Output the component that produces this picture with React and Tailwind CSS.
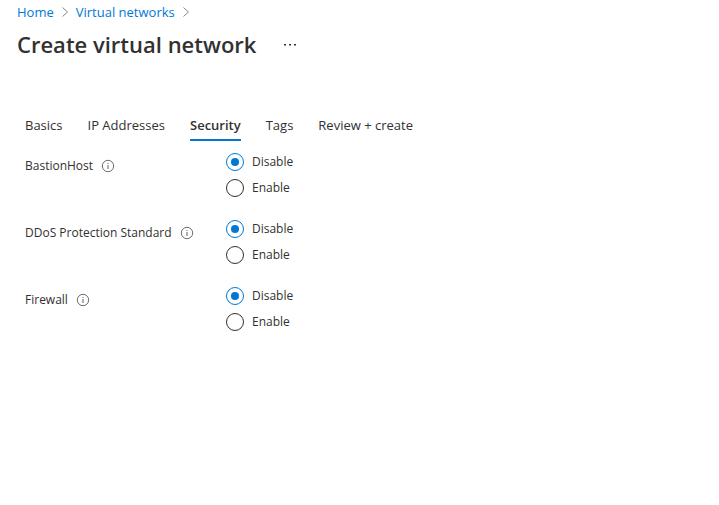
import { useState } from "react";

const TABS = ["Basics", "IP Addresses", "Security", "Tags", "Review + create"];

const SETTINGS = [
  { id: "bastion", label: "BastionHost" },
  { id: "ddos", label: "DDoS Protection Standard" },
  { id: "firewall", label: "Firewall" },
];

function Chevron() {
  return (
    <svg className="h-3 w-2 shrink-0" viewBox="0 0 8 12" fill="none" stroke="#8a8886" aria-hidden="true">
      <path d="M1.5 1.5 6.5 6l-5 4.5" />
    </svg>
  );
}

function InfoIcon() {
  return (
    <svg className="block size-3.5" viewBox="0 0 14 14" fill="none" aria-hidden="true">
      <circle cx="7" cy="7" r="5.7" stroke="#605e5c" strokeWidth="0.9" />
      <path d="M7 6v4" stroke="#605e5c" />
      <path d="M6.5 4h1v1h-1z" fill="#605e5c" />
    </svg>
  );
}

function Setting({ id, label }) {
  const [value, setValue] = useState("Disable");
  return (
    <div role="radiogroup" aria-labelledby={id} className="grid grid-cols-[201px_1fr] items-start">
      <div className="flex items-center gap-2 pt-1">
        <span id={id} className="leading-5">{label}</span>
        <button type="button" aria-label={`About ${label}`}>
          <InfoIcon />
        </button>
      </div>
      <div className="flex flex-col items-start gap-1.5">
        {["Disable", "Enable"].map((option) => (
          <label key={option} className="flex items-center gap-2 leading-5">
            <input
              type="radio"
              name={id}
              value={option}
              checked={value === option}
              onChange={() => setValue(option)}
              className="grid size-[18px] appearance-none place-items-center rounded-full border border-[#323130] before:size-2 before:rounded-full checked:border-[#0078d4] checked:before:bg-[#0078d4]"
            />
            {option}
          </label>
        ))}
      </div>
    </div>
  );
}

export default function App() {
  const [active, setActive] = useState("Security");
  return (
    <main className="min-h-screen bg-white font-['Open_Sans','Noto_Sans',sans-serif] text-[12px] text-[#323130]">
      <header className="px-[17px] pt-0.5">
        <nav aria-label="Breadcrumb" className="flex items-center gap-[7px] text-[13px] leading-5 text-[#0078d4]">
          <a href="#home">Home</a>
          <Chevron />
          <a href="#networks">Virtual networks</a>
          <Chevron />
        </nav>
        <div className="mt-1.5 flex items-center gap-6">
          <h1 className="text-[22px] leading-8 font-semibold">Create virtual network</h1>
          <button type="button" aria-label="More actions" className="p-1">
            <svg className="h-1 w-3" viewBox="0 0 12 4" fill="#323130" aria-hidden="true">
              <path d="M0 2h2v1.5H0zM5 2h2v1.5H5zM10 2h2v1.5h-2z" />
            </svg>
          </button>
        </div>
      </header>
      <div className="px-[25px] pt-[53px]">
        <div role="tablist" className="flex gap-[25px] text-[13px]">
          {TABS.map((tab) => (
            <button
              key={tab}
              type="button"
              role="tab"
              aria-selected={active === tab}
              onClick={() => setActive(tab)}
              className="border-b-2 border-transparent pt-0.5 pb-1 leading-5 aria-selected:border-[#0078d4] aria-selected:font-semibold"
            >
              {tab}
            </button>
          ))}
        </div>
        <form className="mt-[11px] flex flex-col gap-[21px]">
          {SETTINGS.map((setting) => (
            <Setting key={setting.id} {...setting} />
          ))}
        </form>
      </div>
    </main>
  );
}
